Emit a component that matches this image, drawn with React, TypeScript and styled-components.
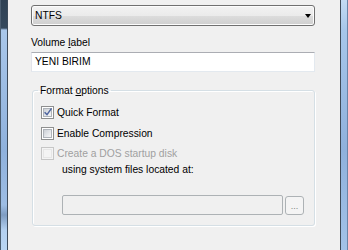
import React, { FC } from 'react'
import styled, { createGlobalStyle, css } from 'styled-components'

const GlobalStyle = createGlobalStyle`
  html, body {
    margin: 0;
    padding: 0;
    background: #f0f0f0;
  }
  body {
    font-family: "Liberation Sans", Arial, sans-serif;
    font-size: 10.3px;
    color: #000;
  }
`

const Window = styled.div`
  display: flex;
  height: 250px;
  width: 348px;
  overflow: hidden;
  background: #f0f0f0;
`

const FrameEdge = styled.div<{ $side: 'left' | 'right' }>`
  flex: 0 0 8px;
  box-sizing: border-box;
  ${({ $side }) =>
    $side === 'left'
      ? css`
          border-left: 1px solid #4b5d70;
          border-right: 1px solid #3c4a5a;
          background: linear-gradient(
            to bottom,
            #2f4154 0px,
            #34485c 28px,
            #a9c7ea 30px,
            #8fb1dc 60%,
            #9dbde4 82%,
            #7e9cc2 86%,
            #b3d0f0 92%,
            #b9d5f2 100%
          );
        `
      : css`
          border-left: 1px solid #3f4a58;
          border-right: 1px solid #6a85a8;
          background: linear-gradient(
            to bottom,
            #c4dbf3 0px,
            #a7c6ea 30px,
            #8fb1dc 60%,
            #a3c2e8 100%
          );
        `}
`

const Content = styled.div`
  flex: 1;
  padding: 5px 25px 0 23px;
  display: flex;
  flex-direction: column;
`

const Select = styled.div`
  box-sizing: border-box;
  height: 21px;
  display: flex;
  align-items: center;
  justify-content: space-between;
  padding: 0 3px 0 3px;
  border: 1px solid #707070;
  border-radius: 3px;
  box-shadow: inset 0 0 0 1px #fcfcfc;
  background: linear-gradient(to bottom, #f2f2f2 0%, #ebebeb 50%, #dddddd 51%, #cfcfcf 100%);
  line-height: 13px;
`

const Arrow = styled.span`
  width: 0;
  height: 0;
  border-left: 3.5px solid transparent;
  border-right: 3.5px solid transparent;
  border-top: 4px solid #000;
  margin-top: 1px;
`

const FieldLabel = styled.div`
  line-height: 13px;
  margin-top: 9.5px;
`

const TextBox = styled.div`
  box-sizing: border-box;
  height: 20px;
  margin-top: 3.5px;
  padding: 0 3px;
  line-height: 18px;
  background: #fff;
  border: 1px solid #e3e9ef;
  border-top-color: #abadb3;
  border-left-color: #e2e3ea;
`

const Group = styled.fieldset`
  margin: 12px 0 0 1px;
  padding: 0 8px 10px 8px;
  border: 1px solid #d5dfe5;
  border-radius: 3px;
  box-shadow: inset 1px 1px 0 #fff, 1px 1px 0 #fff;
  min-width: 0;
`

const Legend = styled.legend`
  margin-left: -3px;
  padding: 0 2px;
  line-height: 13px;
`

const GroupBody = styled.div`
  display: flex;
  flex-direction: column;
  padding-top: 9px;
`

const CheckRow = styled.label<{ $disabled?: boolean; $gap?: number }>`
  display: flex;
  align-items: center;
  height: 13px;
  line-height: 13px;
  gap: 3px;
  margin-bottom: ${({ $gap }) => $gap ?? 0}px;
  color: ${({ $disabled }) => ($disabled ? '#a0a0a0' : '#000')};
`

const Box = styled.span<{ $disabled?: boolean }>`
  box-sizing: border-box;
  flex: 0 0 13px;
  width: 13px;
  height: 13px;
  display: flex;
  align-items: center;
  justify-content: center;
  border: 1px solid ${({ $disabled }) => ($disabled ? '#c6c6c6' : '#8e8f8f')};
  background: ${({ $disabled }) => ($disabled ? '#f4f4f4' : '#fff')};
  padding: 1px;
`

const BoxInner = styled.span<{ $disabled?: boolean }>`
  display: block;
  width: 9px;
  height: 9px;
  box-sizing: border-box;
  position: relative;
  border: 1px solid ${({ $disabled }) => ($disabled ? '#e6e6e6' : '#aeb3b9')};
  background: ${({ $disabled }) =>
    $disabled ? '#f4f4f4' : 'linear-gradient(135deg, #cbcfd5 0%, #e6e8eb 60%, #f6f6f6 100%)'};
`

const Tick = styled.svg`
  position: absolute;
  left: -1px;
  top: -2px;
`

const SubText = styled.div`
  line-height: 13px;
  margin: 2.5px 0 0 21px;
`

const PathRow = styled.div`
  display: flex;
  align-items: flex-start;
  gap: 2px;
  margin: 19.6px 0 0 21px;
`

const PathBox = styled.div`
  box-sizing: border-box;
  width: 221px;
  height: 20px;
  border: 1px solid #adb2b5;
  border-radius: 2px;
  background: #f0f0f0;
`

const BrowseButton = styled.div`
  box-sizing: border-box;
  width: 19px;
  height: 19px;
  margin-top: 1px;
  border: 1px solid #adb2b5;
  border-radius: 3px;
  background: #f4f4f4;
  color: #838383;
  font-size: 9px;
  line-height: 18px;
  text-align: center;
  letter-spacing: 0;
`

const CheckBox: FC<{ checked?: boolean; disabled?: boolean }> = ({ checked, disabled }) => (
  <Box $disabled={disabled}>
    <BoxInner $disabled={disabled}>
      {checked && (
        <Tick width="10" height="10" viewBox="0 0 10 10">
          <path d="M1.6 5.2 L4 7.6 L8.5 1.4" fill="none" stroke="#5066a0" strokeWidth="1.5" />
        </Tick>
      )}
    </BoxInner>
  </Box>
)

const App: FC = () => (
  <>
    <GlobalStyle />
    <Window>
      <FrameEdge $side="left" />
      <Content>
        <Select>
          NTFS
          <Arrow />
        </Select>
        <FieldLabel>
          Volume <u>l</u>abel
        </FieldLabel>
        <TextBox>YENI BIRIM</TextBox>
        <Group>
          <Legend>
            Format <u>o</u>ptions
          </Legend>
          <GroupBody>
            <CheckRow $gap={7.5}>
              <CheckBox checked />
              Quick Format
            </CheckRow>
            <CheckRow $gap={7.5}>
              <CheckBox />
              Enable Compression
            </CheckRow>
            <CheckRow $disabled>
              <CheckBox disabled />
              Create a DOS startup disk
            </CheckRow>
            <SubText>using system files located at:</SubText>
            <PathRow>
              <PathBox />
              <BrowseButton>...</BrowseButton>
            </PathRow>
          </GroupBody>
        </Group>
      </Content>
      <FrameEdge $side="right" />
    </Window>
  </>
)

export default App
